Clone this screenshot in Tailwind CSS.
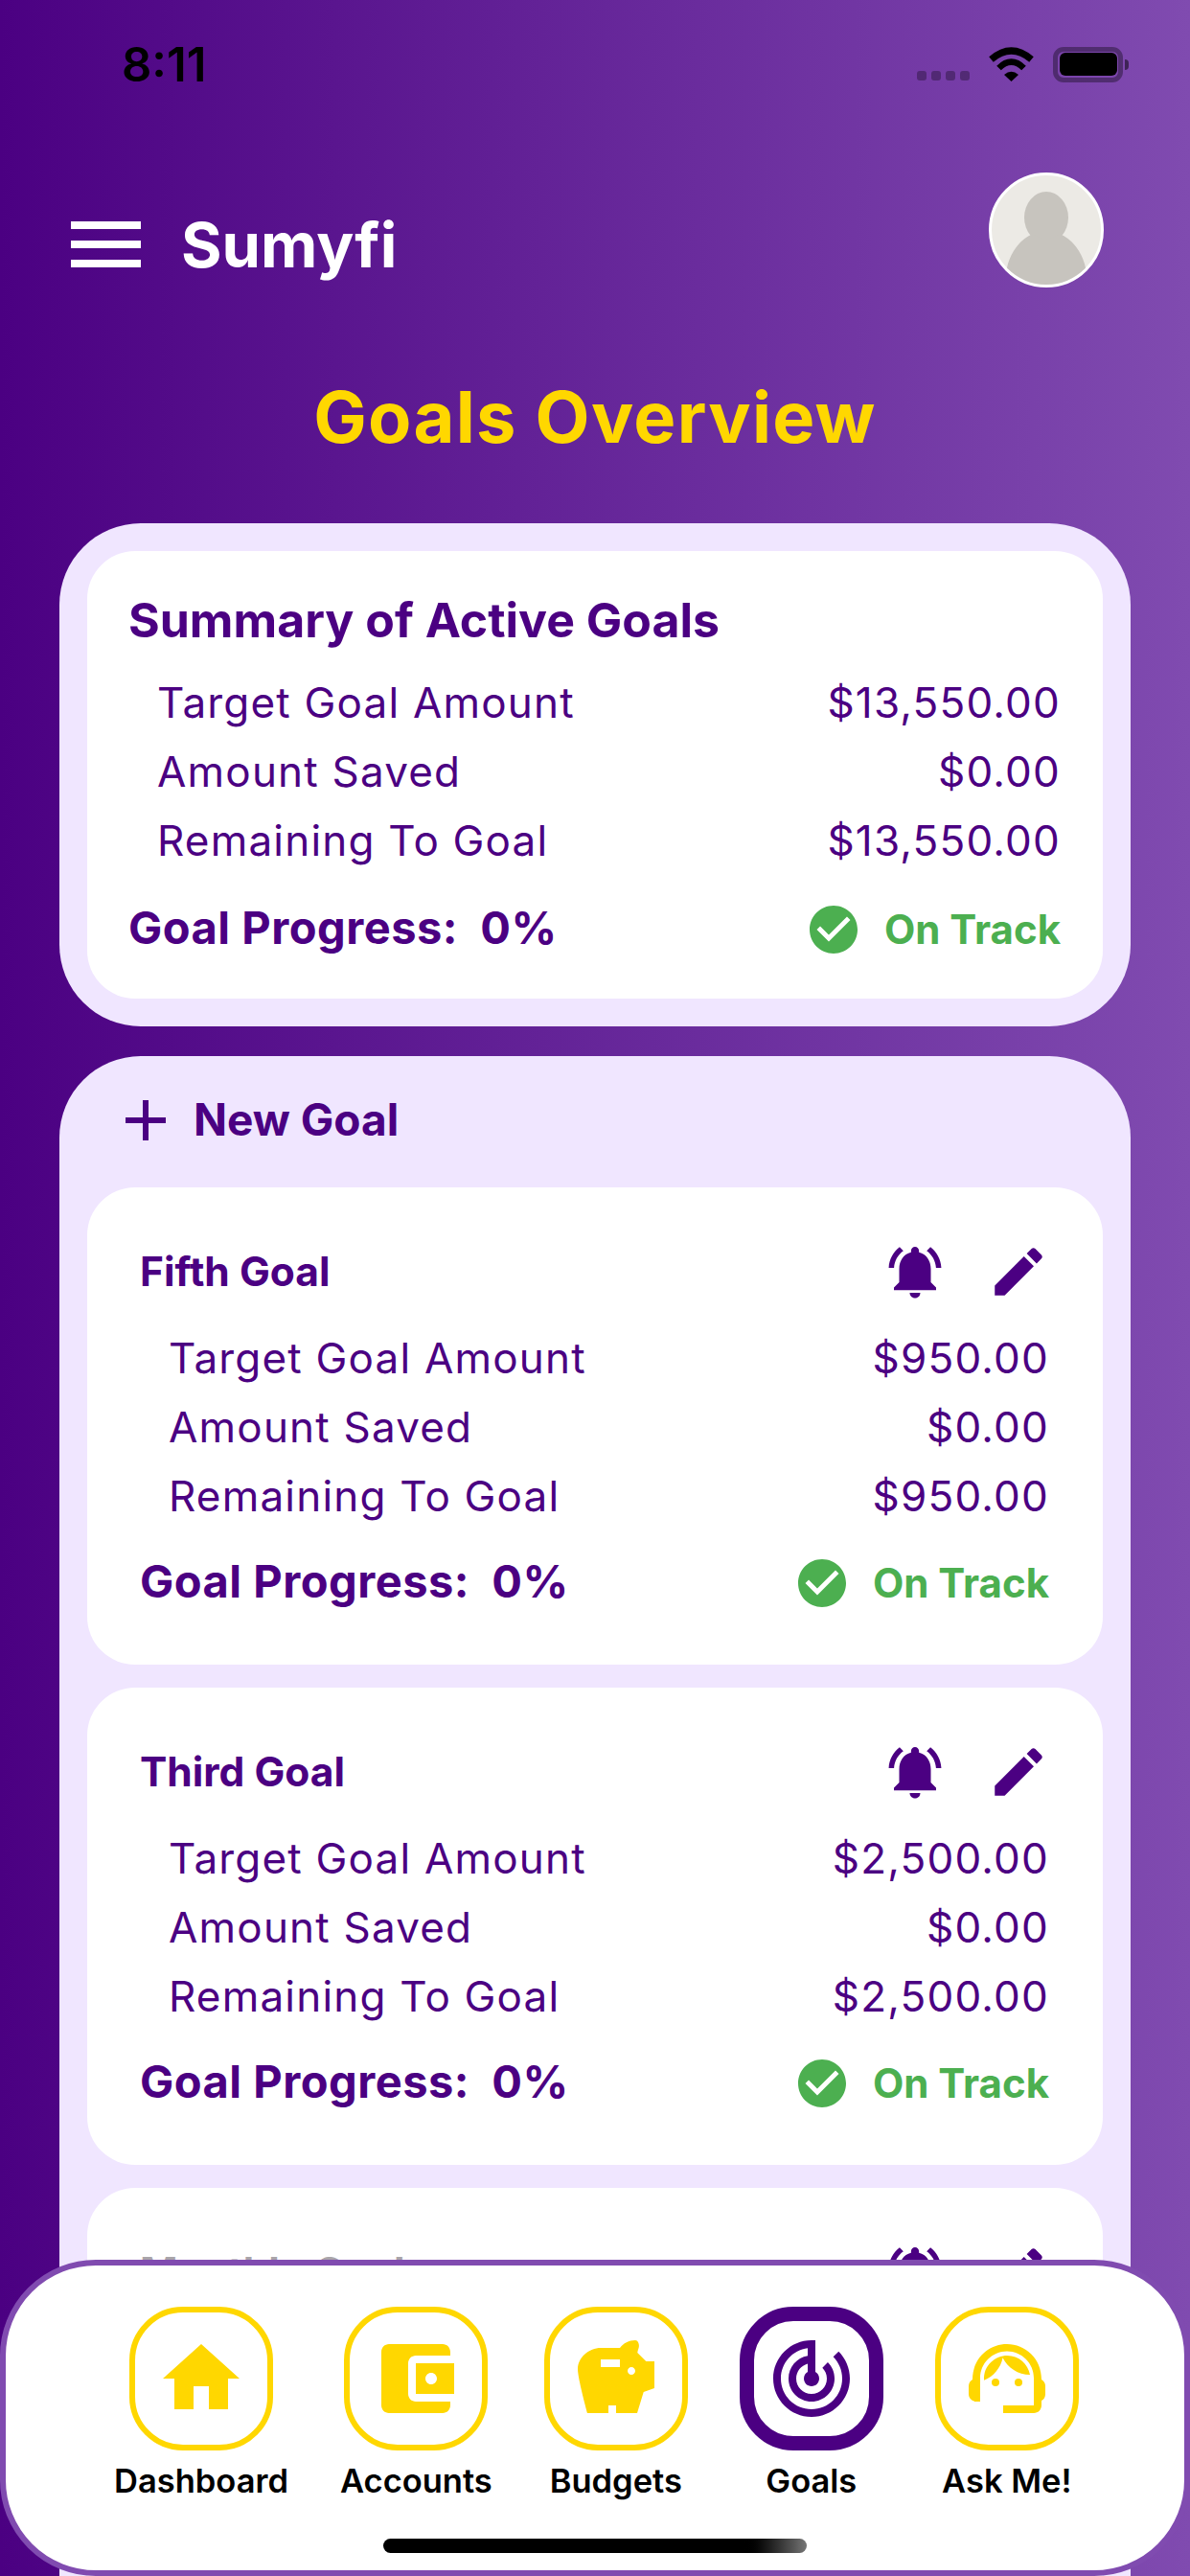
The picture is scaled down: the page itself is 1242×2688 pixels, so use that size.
<!DOCTYPE html>
<html lang="en">
<head>
  <meta charset="UTF-8" />
  <meta name="viewport" content="width=device-width, initial-scale=1.0" />
  <title>Sumyfi - Goals Overview</title>
  <script src="https://cdn.jsdelivr.net/npm/@tailwindcss/browser@4"></script>
</head>
<body class="relative w-[1242px] h-[2688px] overflow-hidden bg-linear-to-r/srgb from-[#4B0082] to-[#804BB0] font-['Inter',sans-serif]">

  <!-- Status bar -->
  <div class="flex items-center justify-between h-[134px] pl-[127px] pr-[64px]">
    <span class="text-[49px] font-semibold text-black leading-none">8:11</span>
    <div class="flex items-center">
      <div class="flex gap-[5px] mt-[24px] mr-[20px]">
        <span class="w-[10px] h-[10px] rounded-[3px] bg-black/30"></span>
        <span class="w-[10px] h-[10px] rounded-[3px] bg-black/30"></span>
        <span class="w-[10px] h-[10px] rounded-[3px] bg-black/30"></span>
        <span class="w-[10px] h-[10px] rounded-[3px] bg-black/30"></span>
      </div>
      <svg class="w-[48px] h-[36px] mr-[19px]" viewBox="0 0 48 36" fill="none" stroke="black">
        <path d="M2.5 13Q23.5 -5 44.5 13" stroke-width="7" />
        <path d="M10.5 22Q23.5 9 36.5 22" stroke-width="6.5" />
        <path d="M23.5 36L16 29Q23.5 22.5 31 29Z" fill="black" stroke="none" />
      </svg>
      <div class="flex items-center">
        <div class="w-[73px] h-[37px] rounded-[11px] border-[5px] border-black/35 p-[1.5px]">
          <div class="w-full h-full rounded-[6px] bg-black"></div>
        </div>
        <div class="w-[4px] h-[11px] ml-[2px] rounded-r-full bg-black/50"></div>
      </div>
    </div>
  </div>

  <!-- Header -->
  <div class="flex items-center h-[120px] mt-[46px] pl-[74px] pr-[90px]">
    <div class="flex items-center mt-[30px]">
      <div class="flex flex-col gap-[12px] w-[73px]">
        <span class="h-[8px] bg-white"></span>
        <span class="h-[8px] bg-white"></span>
        <span class="h-[8px] bg-white"></span>
      </div>
      <h1 class="ml-[42px] text-[65px] font-bold text-white leading-none">Sumyfi</h1>
    </div>
    <div class="ml-auto w-[120px] h-[120px] rounded-full border-[3px] border-white bg-[#ECEAE5] overflow-hidden">
      <svg class="w-full h-full" viewBox="0 0 114 114" fill="#C7C4BE">
        <ellipse cx="57" cy="44" rx="23" ry="27" />
        <path d="M43 61C26 68 15 88 15 106L57 120L99 106C99 88 88 68 71 61C63 68 51 68 43 61Z" />
      </svg>
    </div>
  </div>

  <h2 class="mt-[98px] text-center text-[74px] font-bold text-[#FFD700] leading-none tracking-[1.3px]">Goals Overview</h2>

  <!-- Summary -->
  <section class="mx-[62px] mt-[74px] p-[29px] rounded-[85px] bg-[#F0E6FF]">
    <div class="pt-[48px] pb-[46px] pl-[43px] pr-[44px] rounded-[50px] bg-white text-[#4B0082]">
      <h3 class="text-[50px] font-bold leading-[48px] mb-[26px]">Summary of Active Goals</h3>
      <div class="pl-[30px]" data-rows="$13,550.00|$0.00|$13,550.00"></div>
      <div class="pt-[2px]" data-progress></div>
    </div>
  </section>

  <!-- Goals list -->
  <section class="mx-[62px] mt-[31px] px-[29px] rounded-t-[85px] bg-[#F0E6FF] h-[1700px]">
    <div class="flex items-center h-[137px] pb-[4px] pl-[39px]">
      <svg class="w-[72px] h-[72px] -ml-[14px]" viewBox="0 0 24 24" fill="#4B0082"><path d="M19 13h-6v6h-2v-6H5v-2h6V5h2v6h6v2z" /></svg>
      <span class="ml-[14px] text-[46px] font-bold text-[#4B0082]">New Goal</span>
    </div>
    <div id="goalList" class="flex flex-col gap-[24px]"></div>
  </section>

  <!-- Bottom nav -->
  <nav class="absolute left-0 right-0 bottom-0 h-[330px] rounded-[100px] border-[6px] border-[#804BB0] bg-white pt-[43px]">
    <div class="flex gap-[54px] pl-[113px]">
      <a class="flex flex-col items-center">
        <div class="flex items-center justify-center w-[150px] h-[150px] rounded-[56px] border-[6px] border-[#FFD700]">
          <svg class="w-[96px] h-[96px]" viewBox="0 0 24 24" fill="#FFD700"><path d="M10 20v-6h4v6h5v-8h3L12 3 2 12h3v8z" /></svg>
        </div>
        <span class="mt-[12px] text-[34.5px] font-semibold text-black leading-[40px]">Dashboard</span>
      </a>
      <a class="flex flex-col items-center">
        <div class="flex items-center justify-center w-[150px] h-[150px] rounded-[56px] border-[6px] border-[#FFD700]">
          <svg class="w-[96px] h-[96px]" viewBox="0 0 24 24" fill="#FFD700"><path d="M21 18v1c0 1.1-.9 2-2 2H5c-1.11 0-2-.9-2-2V5c0-1.1.89-2 2-2h14c1.1 0 2 .9 2 2v1h-9c-1.11 0-2 .9-2 2v8c0 1.1.89 2 2 2h9zm-9-2h10V8H12v8zm4-2.5c-.83 0-1.5-.67-1.5-1.5s.67-1.5 1.5-1.5 1.5.67 1.5 1.5-.67 1.5-1.5 1.5z" /></svg>
        </div>
        <span class="mt-[12px] text-[34.5px] font-semibold text-black leading-[40px]">Accounts</span>
      </a>
      <a class="flex flex-col items-center">
        <div class="flex items-center justify-center w-[150px] h-[150px] rounded-[56px] border-[6px] border-[#FFD700]">
          <svg class="w-[96px] h-[96px]" viewBox="0 0 24 24" fill="#FFD700" fill-rule="evenodd"><path d="M19.83 7.5l-2.27-2.27c.07-.42.18-.81.32-1.15C18.2 3.3 17.8 2 17 2c-1.64 0-3.09.79-4 2H8C4.96 4 2 6.46 2 9.5 2 12 4.5 21 4.5 21H10v-2h2v2h5.5l1.68-5.5L22 14.5v-7h-2.17zM13 9H8V7h5v2zm3 2c-.55 0-1-.45-1-1s.45-1 1-1 1 .45 1 1-.45 1-1 1z" /></svg>
        </div>
        <span class="mt-[12px] text-[34.5px] font-semibold text-black leading-[40px]">Budgets</span>
      </a>
      <a class="flex flex-col items-center">
        <div class="flex items-center justify-center w-[150px] h-[150px] rounded-[56px] border-[15px] border-[#4B0082]">
          <svg class="w-[96px] h-[96px] shrink-0" viewBox="0 0 24 24" fill="#4B0082"><path d="M19.07 4.93l-1.41 1.41C19.1 7.79 20 9.79 20 12c0 4.42-3.58 8-8 8s-8-3.58-8-8c0-4.08 3.05-7.44 7-7.93v2.02C8.16 6.57 6 9.03 6 12c0 3.31 2.69 6 6 6s6-2.69 6-6c0-1.66-.67-3.16-1.76-4.24l-1.41 1.41C15.55 9.9 16 10.9 16 12c0 2.21-1.79 4-4 4s-4-1.79-4-4c0-1.86 1.28-3.41 3-3.86v2.14c-.6.35-1 .98-1 1.72 0 1.1.9 2 2 2s2-.9 2-2c0-.74-.4-1.38-1-1.72V2h-1C6.48 2 2 6.48 2 12s4.48 10 10 10 10-4.48 10-10c0-2.76-1.12-5.26-2.93-7.07z" /></svg>
        </div>
        <span class="mt-[12px] text-[34.5px] font-semibold text-black leading-[40px]">Goals</span>
      </a>
      <a class="flex flex-col items-center">
        <div class="flex items-center justify-center w-[150px] h-[150px] rounded-[56px] border-[6px] border-[#FFD700]">
          <svg class="w-[96px] h-[96px]" viewBox="0 0 24 24" fill="#FFD700">
            <path d="M21 12.22C21 6.73 16.74 3 12 3c-4.69 0-9 3.65-9 9.28-.6.34-1 .98-1 1.72v2c0 1.1.9 2 2 2h1v-6.1c0-3.87 3.13-7 7-7s7 3.13 7 7V19h-8v2h8c1.1 0 2-.9 2-2v-1.22c.59-.31 1-.92 1-1.64v-2.3c0-.7-.41-1.31-1-1.62z" />
            <circle cx="9" cy="13" r="1" /><circle cx="15" cy="13" r="1" />
            <path d="M18 11.03C17.52 8.18 15.04 6 12.05 6c-3.03 0-6.29 2.51-6.03 6.45 2.47-1.01 4.33-3.21 4.86-5.89 1.31 2.63 4 4.44 7.12 4.47z" />
          </svg>
        </div>
        <span class="mt-[12px] text-[34.5px] font-semibold text-black leading-[40px]">Ask Me!</span>
      </a>
    </div>
    <div class="absolute left-[394px] bottom-[18px] w-[442px] h-[15px] rounded-full bg-gradient-to-r from-black from-85% to-[#777777]"></div>
  </nav>

  <script>
  const progressRow = `
    <div class="flex items-center justify-between h-[56px] mt-[25px]">
      <span class="text-[47px] font-bold leading-[56px] tracking-[0.5px]">Goal Progress:&nbsp; 0%</span>
      <span class="flex items-center pt-[4px]">
        <svg class="w-[60px] h-[60px]" viewBox="0 0 24 24" fill="#4CAF50"><path d="M12 2C6.48 2 2 6.48 2 12s4.48 10 10 10 10-4.48 10-10S17.52 2 12 2zm-2 15l-5-5 1.41-1.41L10 14.17l7.59-7.59L19 8l-9 9z" /></svg>
        <span class="ml-[23px] text-[42px] font-bold text-[#4CAF50] leading-[56px]">On Track</span>
      </span>
    </div>`;

  function rowsHtml(values) {
    const labels = ["Target Goal Amount", "Amount Saved", "Remaining To Goal"];
    return labels.map((label, i) => `
      <div class="flex items-center justify-between h-[72px] text-[44px] tracking-[1.2px]">
        <span>${label}</span><span>${values[i]}</span>
      </div>`).join("");
  }

  // summary card
  const summaryRows = document.querySelector("[data-rows]");
  summaryRows.innerHTML = rowsHtml(summaryRows.dataset.rows.split("|"));
  document.querySelector("[data-progress]").innerHTML = progressRow;

  // goal cards, the last one runs under the nav so only its header shows, title in grey
  const goals = [
    { name: "Fifth Goal", amount: "$950.00", titleColor: "text-[#4B0082]" },
    { name: "Third Goal", amount: "$2,500.00", titleColor: "text-[#4B0082]" },
    { name: "Monthly Goal", titleColor: "text-[#A9A5A9]" },
  ];
  document.getElementById("goalList").innerHTML = goals.map(goal => `
    <div class="min-h-[498px] pt-[53px] pb-[59px] pl-[55px] pr-[56px] rounded-[50px] bg-white text-[#4B0082]">
      <div class="flex items-center justify-between h-[70px] mb-[19px]">
        <h4 class="text-[42.5px] font-bold ${goal.titleColor}">${goal.name}</h4>
        <div class="flex items-center gap-[42px] -mr-[1px]">
          <svg class="w-[66px] h-[66px]" viewBox="0 0 24 24" fill="#4B0082"><path d="M7.58 4.08 6.15 2.65C3.75 4.48 2.17 7.3 2.03 10.5h2c.15-2.65 1.51-4.97 3.55-6.42zm12.39 6.42h2c-.15-3.2-1.73-6.02-4.12-7.85l-1.42 1.43c2.02 1.45 3.39 3.77 3.54 6.42zM18 11c0-3.07-1.64-5.64-4.5-6.32V4c0-.83-.67-1.5-1.5-1.5s-1.5.67-1.5 1.5v.68C7.63 5.36 6 7.92 6 11v5l-2 2v1h16v-1l-2-2v-5zm-6 11c.14 0 .27-.01.4-.04.65-.14 1.18-.58 1.44-1.18.1-.24.15-.5.15-.78h-4c.01 1.1.9 2 2.01 2z" /></svg>
          <svg class="w-[66px] h-[66px]" viewBox="0 0 24 24" fill="#4B0082"><path d="M3 17.25V21h3.75L17.81 9.94l-3.75-3.75L3 17.25zM20.71 7.04c.39-.39.39-1.02 0-1.41l-2.34-2.34c-.39-.39-1.02-.39-1.41 0l-1.83 1.83 3.75 3.75 1.83-1.83z" /></svg>
        </div>
      </div>
      ${goal.amount ? `<div class="pl-[30px]">${rowsHtml([goal.amount, "$0.00", goal.amount])}</div>${progressRow}` : ""}
    </div>`).join("");
  </script>
</body>
</html>
